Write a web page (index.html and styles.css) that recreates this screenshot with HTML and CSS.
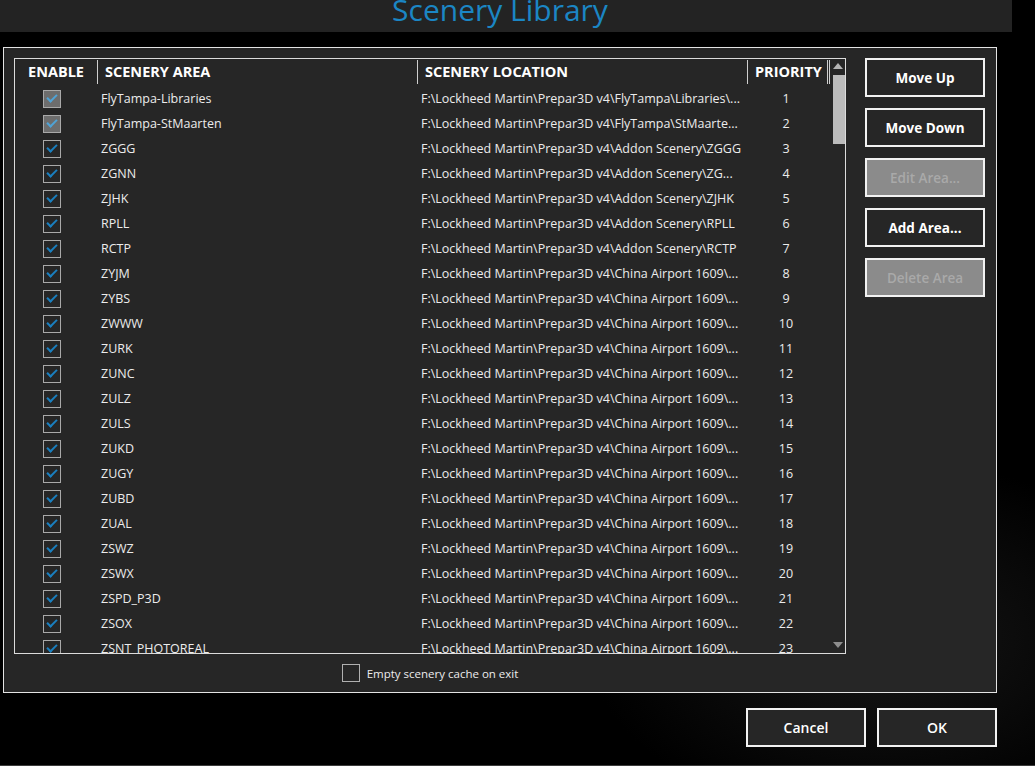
FILE: index.html
```html
<!DOCTYPE html>
<html lang="en">
<head>
    <meta charset="UTF-8">
    <title>Scenery Library</title>
    <link rel="stylesheet" href="styles.css">
</head>
<body>

    <!-- Title bar -->
    <div class="titlebar">
        <h1 class="title">Scenery Library</h1>
    </div>

    <!-- Main panel -->
    <div class="panel">
        <div class="list-col">
            <div class="list-box">
                <div class="list">
                    <div class="header">
                        <div class="hcell center">ENABLE</div>
                        <div class="hcell">SCENERY AREA</div>
                        <div class="hcell">SCENERY LOCATION</div>
                        <div class="hcell last">PRIORITY</div>
                    </div>
                    <div class="rows">
                        <div class="row"><div class="cell enable"><span class="check disabled"></span></div><div class="cell">FlyTampa-Libraries</div><div class="cell">F:\Lockheed Martin\Prepar3D v4\FlyTampa\Libraries\...</div><div class="cell prio">1</div></div>
                        <div class="row"><div class="cell enable"><span class="check disabled"></span></div><div class="cell">FlyTampa-StMaarten</div><div class="cell">F:\Lockheed Martin\Prepar3D v4\FlyTampa\StMaarte...</div><div class="cell prio">2</div></div>
                        <div class="row"><div class="cell enable"><span class="check"></span></div><div class="cell">ZGGG</div><div class="cell">F:\Lockheed Martin\Prepar3D v4\Addon Scenery\ZGGG</div><div class="cell prio">3</div></div>
                        <div class="row"><div class="cell enable"><span class="check"></span></div><div class="cell">ZGNN</div><div class="cell">F:\Lockheed Martin\Prepar3D v4\Addon Scenery\ZG...</div><div class="cell prio">4</div></div>
                        <div class="row"><div class="cell enable"><span class="check"></span></div><div class="cell">ZJHK</div><div class="cell">F:\Lockheed Martin\Prepar3D v4\Addon Scenery\ZJHK</div><div class="cell prio">5</div></div>
                        <div class="row"><div class="cell enable"><span class="check"></span></div><div class="cell">RPLL</div><div class="cell">F:\Lockheed Martin\Prepar3D v4\Addon Scenery\RPLL</div><div class="cell prio">6</div></div>
                        <div class="row"><div class="cell enable"><span class="check"></span></div><div class="cell">RCTP</div><div class="cell">F:\Lockheed Martin\Prepar3D v4\Addon Scenery\RCTP</div><div class="cell prio">7</div></div>
                        <div class="row"><div class="cell enable"><span class="check"></span></div><div class="cell">ZYJM</div><div class="cell">F:\Lockheed Martin\Prepar3D v4\China Airport 1609\...</div><div class="cell prio">8</div></div>
                        <div class="row"><div class="cell enable"><span class="check"></span></div><div class="cell">ZYBS</div><div class="cell">F:\Lockheed Martin\Prepar3D v4\China Airport 1609\...</div><div class="cell prio">9</div></div>
                        <div class="row"><div class="cell enable"><span class="check"></span></div><div class="cell">ZWWW</div><div class="cell">F:\Lockheed Martin\Prepar3D v4\China Airport 1609\...</div><div class="cell prio">10</div></div>
                        <div class="row"><div class="cell enable"><span class="check"></span></div><div class="cell">ZURK</div><div class="cell">F:\Lockheed Martin\Prepar3D v4\China Airport 1609\...</div><div class="cell prio">11</div></div>
                        <div class="row"><div class="cell enable"><span class="check"></span></div><div class="cell">ZUNC</div><div class="cell">F:\Lockheed Martin\Prepar3D v4\China Airport 1609\...</div><div class="cell prio">12</div></div>
                        <div class="row"><div class="cell enable"><span class="check"></span></div><div class="cell">ZULZ</div><div class="cell">F:\Lockheed Martin\Prepar3D v4\China Airport 1609\...</div><div class="cell prio">13</div></div>
                        <div class="row"><div class="cell enable"><span class="check"></span></div><div class="cell">ZULS</div><div class="cell">F:\Lockheed Martin\Prepar3D v4\China Airport 1609\...</div><div class="cell prio">14</div></div>
                        <div class="row"><div class="cell enable"><span class="check"></span></div><div class="cell">ZUKD</div><div class="cell">F:\Lockheed Martin\Prepar3D v4\China Airport 1609\...</div><div class="cell prio">15</div></div>
                        <div class="row"><div class="cell enable"><span class="check"></span></div><div class="cell">ZUGY</div><div class="cell">F:\Lockheed Martin\Prepar3D v4\China Airport 1609\...</div><div class="cell prio">16</div></div>
                        <div class="row"><div class="cell enable"><span class="check"></span></div><div class="cell">ZUBD</div><div class="cell">F:\Lockheed Martin\Prepar3D v4\China Airport 1609\...</div><div class="cell prio">17</div></div>
                        <div class="row"><div class="cell enable"><span class="check"></span></div><div class="cell">ZUAL</div><div class="cell">F:\Lockheed Martin\Prepar3D v4\China Airport 1609\...</div><div class="cell prio">18</div></div>
                        <div class="row"><div class="cell enable"><span class="check"></span></div><div class="cell">ZSWZ</div><div class="cell">F:\Lockheed Martin\Prepar3D v4\China Airport 1609\...</div><div class="cell prio">19</div></div>
                        <div class="row"><div class="cell enable"><span class="check"></span></div><div class="cell">ZSWX</div><div class="cell">F:\Lockheed Martin\Prepar3D v4\China Airport 1609\...</div><div class="cell prio">20</div></div>
                        <div class="row"><div class="cell enable"><span class="check"></span></div><div class="cell">ZSPD_P3D</div><div class="cell">F:\Lockheed Martin\Prepar3D v4\China Airport 1609\...</div><div class="cell prio">21</div></div>
                        <div class="row"><div class="cell enable"><span class="check"></span></div><div class="cell">ZSOX</div><div class="cell">F:\Lockheed Martin\Prepar3D v4\China Airport 1609\...</div><div class="cell prio">22</div></div>
                        <div class="row"><div class="cell enable"><span class="check"></span></div><div class="cell">ZSNT_PHOTOREAL</div><div class="cell">F:\Lockheed Martin\Prepar3D v4\China Airport 1609\...</div><div class="cell prio">23</div></div>
                    </div>
                </div>
                <div class="scrollbar">
                    <div class="arrow up"></div>
                    <div class="thumb"></div>
                    <div class="track"></div>
                    <div class="arrow down"></div>
                </div>
            </div>
            <div class="cache">
                <span class="box"></span>
                <span>Empty scenery cache on exit</span>
            </div>
        </div>

        <div class="side-buttons">
            <button class="button">Move Up</button>
            <button class="button">Move Down</button>
            <button class="button disabled">Edit Area...</button>
            <button class="button">Add Area...</button>
            <button class="button disabled">Delete Area</button>
        </div>
    </div>

    <!-- Dialog buttons -->
    <div class="footer">
        <button class="button wide">Cancel</button>
        <button class="button wide">OK</button>
    </div>

</body>
</html>
```

FILE: styles.css
```css
body {
    margin: 0;
    height: 765px;
    overflow: hidden;
    font-family: "Open Sans", "Noto Sans", sans-serif;
    color: #ececec;
    background-color: #000;
    background-image: radial-gradient(ellipse 420px 260px at 880px 640px, #161616, #000 70%);
    border-bottom: 1px solid #3c3c3c;
}
.titlebar {
    width: 1000px;
    height: 32px;
    padding-right: 12px;
    background-color: #232323;
    overflow: hidden;
    text-align: center;
}
.title {
    margin: -5px 0 0 0;
    font-size: 30px;
    line-height: 30px;
    font-weight: normal;
    color: #1b86c4;
}
.panel {
    display: flex;
    width: 992px;
    height: 644px;
    margin: 15px 0 0 3px;
    background-color: #262626;
    border: 1px solid #e4e4e4;
}
.list-col {
    display: flex;
    flex-direction: column;
    margin: 10px 0 0 10px;
}
.list-box {
    display: flex;
    width: 830px;
    height: 594px;
    border: 1px solid #dcdcdc;
    overflow: hidden;
}
.list {
    width: 815px;
}
.header {
    display: grid;
    grid-template-columns: 83px 320px 330px 82px;
    height: 24px;
    margin-top: 1px;
}
.hcell {
    border-right: 1px solid #cfcfcf;
    padding-left: 7px;
    font-size: 14.5px;
    font-weight: bold;
    line-height: 24px;
    color: #fff;
    white-space: nowrap;
    overflow: hidden;
}
.hcell.center {
    padding-left: 0;
    text-align: center;
}
.hcell.last {
    border-right: 3px double #cfcfcf;
}
.rows {
    padding-top: 2px;
}
.row {
    display: grid;
    grid-template-columns: 83px 320px 330px 82px;
    height: 25px;
    align-items: center;
    font-size: 12.5px;
}
.cell {
    padding-left: 3px;
    white-space: nowrap;
    overflow: hidden;
}
.cell.enable {
    display: flex;
    padding-left: 28px;
}
.cell.prio {
    text-align: center;
    padding-left: 0;
    padding-right: 6px;
}
.check {
    position: relative;
    width: 16px;
    height: 16px;
    border: 1px solid #a9a9a9;
}
.check::after {
    content: "";
    position: absolute;
    left: 3px;
    top: 3px;
    width: 8px;
    height: 4px;
    border-left: 2px solid #1a7fbf;
    border-bottom: 2px solid #1a7fbf;
    transform: rotate(-45deg);
}
.check.disabled {
    background-color: #6d6d6d;
}
.check.disabled::after {
    border-color: #4fa3d6;
}
.scrollbar {
    display: flex;
    flex-direction: column;
    align-items: center;
    width: 15px;
    background-color: #262626;
}
.arrow {
    width: 0;
    height: 0;
    border-left: 5px solid transparent;
    border-right: 5px solid transparent;
}
.arrow.up {
    margin-top: 4px;
    border-bottom: 6px solid #b4b4b4;
}
.arrow.down {
    margin-bottom: 5px;
    border-top: 6px solid #8e8e8e;
}
.thumb {
    width: 12px;
    height: 69px;
    margin-top: 6px;
    margin-left: 2px;
    background-color: #bcbcbc;
}
.track {
    flex: 1;
}
.cache {
    display: flex;
    align-items: center;
    justify-content: center;
    gap: 7px;
    margin-top: 10px;
    font-size: 11.5px;
}
.cache .box {
    width: 16px;
    height: 16px;
    border: 1px solid #b0b0b0;
}
.side-buttons {
    display: flex;
    flex-direction: column;
    gap: 11px;
    margin: 10px 0 0 19px;
}
.button {
    width: 120px;
    height: 39px;
    background-color: #262626;
    border: 2px solid #f2f2f2;
    color: #fff;
    font-family: "Open Sans", "Noto Sans", sans-serif;
    font-size: 13.5px;
    font-weight: bold;
    cursor: pointer;
    padding: 0;
}
.button.disabled {
    background-color: #8b8b8b;
    color: #a9a9a9;
    font-weight: 600;
}
.footer {
    display: flex;
    justify-content: flex-end;
    gap: 11px;
    width: 997px;
    margin-top: 15px;
}
.button.wide {
    width: 120px;
    font-weight: 600;
    font-size: 14px;
}
```
